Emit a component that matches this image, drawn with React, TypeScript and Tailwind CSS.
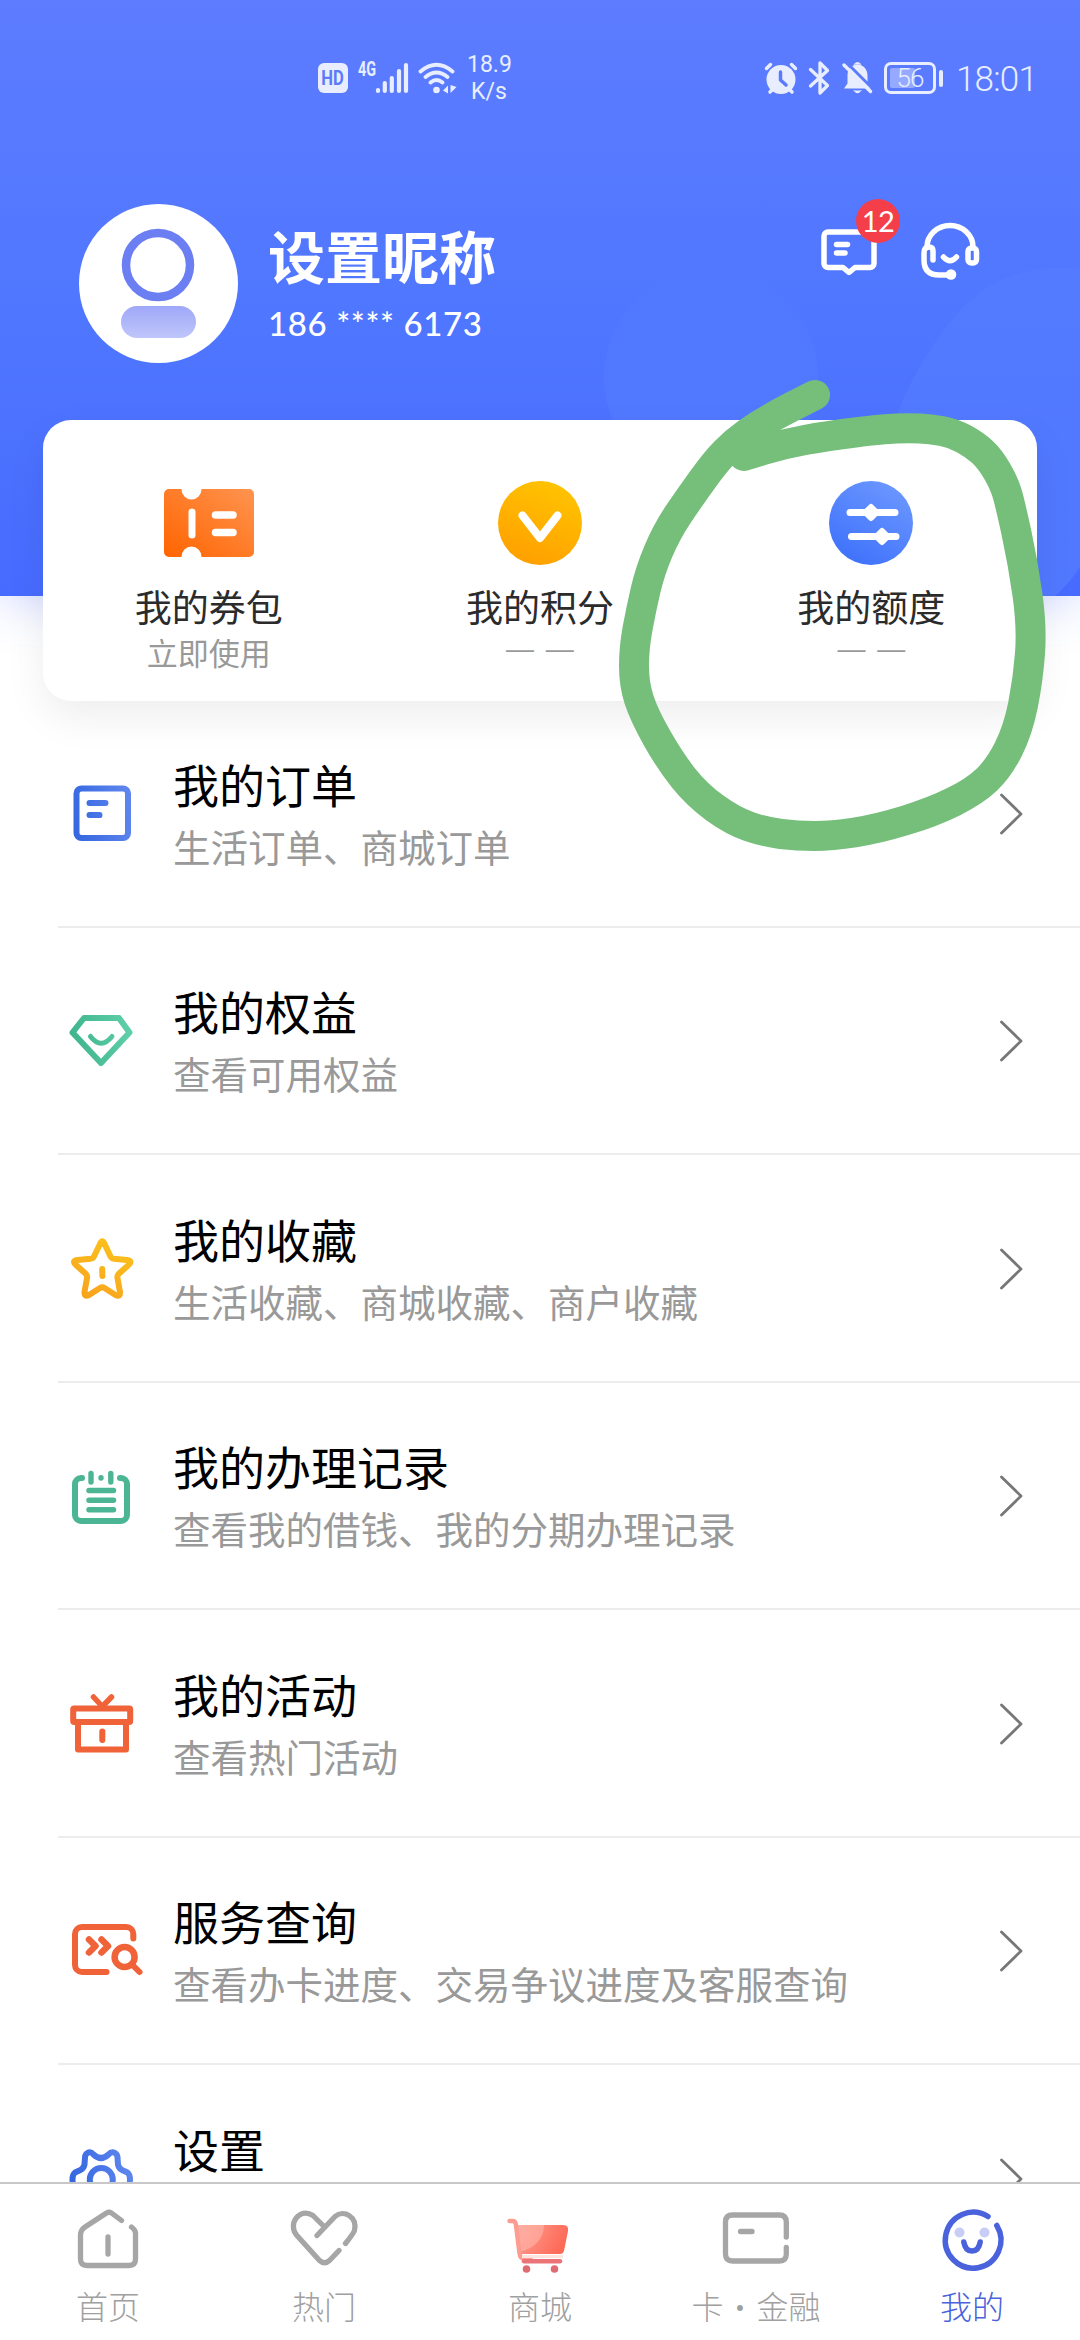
import type { ReactNode } from 'react';

const stroke = {
  fill: 'none',
  strokeLinecap: 'round' as const,
  strokeLinejoin: 'round' as const,
};

function Gradients() {
  return (
    <svg className="absolute" width="0" height="0" aria-hidden="true">
      <defs>
        <linearGradient id="blue" gradientUnits="userSpaceOnUse" x1="6" y1="40" x2="66" y2="28">
          <stop offset="0" stopColor="#3567e0" />
          <stop offset="1" stopColor="#5f86ee" />
        </linearGradient>
        <linearGradient id="green" gradientUnits="userSpaceOnUse" x1="6" y1="40" x2="66" y2="30">
          <stop offset="0" stopColor="#3fb48e" />
          <stop offset="1" stopColor="#5fcfa8" />
        </linearGradient>
        <linearGradient id="yellow" gradientUnits="userSpaceOnUse" x1="20" y1="66" x2="50" y2="6">
          <stop offset="0" stopColor="#f8a31c" />
          <stop offset="1" stopColor="#fbc21d" />
        </linearGradient>
        <linearGradient id="ticket" x1="0" y1="1" x2="1" y2="0">
          <stop offset="0" stopColor="#ff6400" />
          <stop offset="1" stopColor="#ff9450" />
        </linearGradient>
        <linearGradient id="points" x1="0.3" y1="1" x2="0.7" y2="0">
          <stop offset="0" stopColor="#ff9f00" />
          <stop offset="1" stopColor="#ffc400" />
        </linearGradient>
        <linearGradient id="quota" x1="0.2" y1="1" x2="0.8" y2="0">
          <stop offset="0" stopColor="#3d70fb" />
          <stop offset="1" stopColor="#6c98ff" />
        </linearGradient>
        <linearGradient id="cart" x1="0" y1="0" x2="1" y2="0.3">
          <stop offset="0" stopColor="#ffa396" />
          <stop offset="1" stopColor="#fd6a58" />
        </linearGradient>
        <linearGradient id="pill" x1="0" y1="0" x2="0" y2="1">
          <stop offset="0" stopColor="#9fa8f8" />
          <stop offset="1" stopColor="#bfc6fb" />
        </linearGradient>
        <linearGradient id="bubble" x1="0" y1="0" x2="0" y2="1">
          <stop offset="0" stopColor="#5b86ff" stopOpacity="0" />
          <stop offset="1" stopColor="#5b86ff" stopOpacity="0.45" />
        </linearGradient>
        <linearGradient id="leaf" x1="0" y1="0" x2="0" y2="1">
          <stop offset="0" stopColor="#5b86ff" stopOpacity="0.2" />
          <stop offset="1" stopColor="#5b86ff" stopOpacity="0.5" />
        </linearGradient>
      </defs>
    </svg>
  );
}

function StatusBar() {
  return (
    <div className="flex h-[106px] justify-between pt-[50px] pr-[47px] pl-[318px] text-[#e8eeff]">
      <div className="flex h-[56px] items-center">
        <div className="mr-[10px] flex h-[30px] w-[30px] items-center justify-center rounded-[6px] bg-[#e8eeff] font-['Roboto',sans-serif] text-[20px] leading-none font-bold text-[#5b7bfb]">
          <span className="inline-block scale-x-[0.83]">HD</span>
        </div>
        <span className="mr-[-1px] w-[18px] self-start pt-[8px] font-['Roboto',sans-serif] text-[20px] leading-[22px] font-bold">
          <span className="inline-block origin-left scale-x-[0.72]">4G</span>
        </span>
        <svg className="mr-[8px]" width="35" height="32" viewBox="0 0 35 32" stroke="currentColor" strokeWidth="4.2" {...stroke}>
          <path d="M3 29v-1M9.8 29v-8M16.8 29V16M24 29V9M31 29V3" />
        </svg>
        <svg className="mr-[9px]" width="40" height="32" viewBox="0 0 40 32" stroke="currentColor" strokeWidth="3.8" {...stroke}>
          <path d="M2.500 9.500Q18.500 -4 34.500 9.500M7.500 15Q18.500 6 29.500 15M12.500 20.500Q18.500 15.500 24.500 20.500" />
          <circle cx="18.500" cy="28" r="3.300" fill="currentColor" stroke="none" />
          <path d="M25 28.500l5-5v8zM32.500 23v8l6-6z" fill="currentColor" stroke="none" />
        </svg>
        <div className="w-[44px] text-center font-['Roboto',sans-serif] text-[23px] leading-[27px]">
          <div>18.9</div>
          <div>K/s</div>
        </div>
      </div>
      <div className="flex h-[56px] items-center">
        <svg className="mr-[10px]" width="34" height="34" viewBox="0 0 34 34" stroke="currentColor" {...stroke}>
          <circle cx="17" cy="18.500" r="14.500" fill="currentColor" stroke="none" />
          <path d="M2.500 7.500l4-4M31.500 7.500l-4-4M6 31l3-3M28 31l-3-3" strokeWidth="3.500" />
          <path d="M16.500 11v8l5.500 5" stroke="#5b7bfb" strokeWidth="3.500" />
        </svg>
        <svg className="mr-[11px]" width="23" height="36" viewBox="0 0 23 36" stroke="currentColor" strokeWidth="3.300" {...stroke}>
          <path d="M2.500 9.500L19.500 25.500L12 33V3L19.500 10.500L2.500 26" />
        </svg>
        <svg className="mr-[11px]" width="31" height="34" viewBox="0 0 31 34" {...stroke}>
          <path d="M15.500 3.500c6 0 10 5 10 11v8l3.500 5H2l3.500-5v-8c0-6 4-11 10-11z" fill="currentColor" />
          <path d="M12 3.500q3.500-4 7 0M12 29.500q3.500 5 7 0" fill="currentColor" stroke="currentColor" strokeWidth="1" />
          <path d="M3 0L31 28" stroke="#5b7bfb" strokeWidth="3" />
          <path d="M2 4L28.500 30.500" stroke="currentColor" strokeWidth="3.300" />
        </svg>
        <div className="relative flex h-[32px] w-[52px] items-center justify-center rounded-[7px] border-[3px] border-[#e8eeff]">
          <div className="absolute top-[3px] left-[3px] h-[20px] w-[25px] rounded-[2px] bg-[#94a9ff]" />
          <span className="relative font-['Roboto',sans-serif] text-[26px] leading-none font-light tracking-[-1px]">56</span>
        </div>
        <div className="mr-[13px] ml-[3px] h-[17px] w-[4px] rounded-[2px] bg-[#e8eeff]" />
        <span className="mt-[2px] w-[77px] font-['Roboto',sans-serif] text-[35px] leading-none font-light tracking-[-0.8px] whitespace-nowrap">18:01</span>
      </div>
    </div>
  );
}

function Profile() {
  return (
    <div className="flex items-start pt-[98px] pr-[98px] pl-[79px] text-white">
      <svg width="160" height="160" viewBox="0 0 160 160">
        <circle cx="79.500" cy="79.500" r="79.500" fill="#fff" />
        <circle cx="79" cy="61" r="32" fill="none" stroke="#6b7ef2" strokeWidth="8.500" />
        <rect x="42" y="102" width="75" height="32" rx="16" fill="url(#pill)" />
      </svg>
      <div className="mt-[16px] ml-[29px] flex-1">
        <h1 className="text-[57px] leading-[68px] font-bold">设置昵称</h1>
        <p className="mt-[15px] font-['Lato',sans-serif] text-[33px] leading-[40px] font-medium tracking-[0.6px]">186 **** 6173</p>
      </div>
      <div className="relative mt-[21px] mr-[40px]">
        <svg width="60" height="54" viewBox="0 0 60 54" stroke="#fff" strokeWidth="5.500" {...stroke}>
          <path d="M10 7H52a4 4 0 0 1 4 4V38.500a4 4 0 0 1-4 4H37l-6 5l-6-5H10a4 4 0 0 1-4-4V11a4 4 0 0 1 4-4z" />
          <path d="M18.500 19.500h11M18.500 28h8.500" />
        </svg>
        <span className="absolute top-[-26px] left-[38px] flex h-[44px] w-[44px] items-center justify-center rounded-full bg-[#f43f4a] pb-[2px] font-['Lato',sans-serif] text-[29px] leading-none tracking-[-0.5px]">
          12
        </span>
      </div>
      <svg className="mt-[16px]" width="64" height="64" viewBox="0 0 64 64" stroke="#fff" strokeWidth="5.500" {...stroke}>
        <path d="M9 27A23 21.500 0 0 1 55 27" />
        <path d="M15 40V31q0-4-4-4q-5 0-5 6v7q0 15 15 15h11" />
        <rect x="50" y="28" width="8.500" height="15" rx="3.500" />
        <path d="M25.500 37q6.500 7.500 13 0" />
        <circle cx="33" cy="54.500" r="5.300" fill="#fff" stroke="none" />
      </svg>
    </div>
  );
}

function Shortcut({ icon, label, hint }: { icon: ReactNode; label: string; hint?: string }) {
  return (
    <div className="flex flex-1 flex-col items-center pt-[57px]">
      <div className="flex h-[92px] items-center">{icon}</div>
      <div className="mt-[10px] text-[37px] leading-[54px] text-[#2b2b2b]">{label}</div>
      {hint ? (
        <div className="-mt-px text-[31px] leading-[40px] text-[#999]">{hint}</div>
      ) : (
        <div className="-mt-[2px] font-['Liberation_Sans',sans-serif] text-[28px] leading-[36px] text-[#999] [word-spacing:4px]">— —</div>
      )}
    </div>
  );
}

const shortcuts = [
  {
    label: '我的券包',
    hint: '立即使用',
    icon: (
      <svg width="90" height="68" viewBox="0 0 90 68">
        <path d="M5 0H17.500a10 10.500 0 0 0 20 0H85a5 5 0 0 1 5 5V63a5 5 0 0 1-5 5H37.500a10 10.500 0 0 0-20 0H5a5 5 0 0 1-5-5V5a5 5 0 0 1 5-5z" fill="url(#ticket)" />
        <path d="M28 23V46" stroke="#fff" strokeWidth="7" {...stroke} />
        <path d="M51.500 26H69M51.500 43.500H69" stroke="#fff" strokeWidth="7.500" {...stroke} />
      </svg>
    ),
  },
  {
    label: '我的积分',
    icon: (
      <svg width="84" height="84" viewBox="0 0 84 84">
        <circle cx="42" cy="42" r="42" fill="url(#points)" />
        <path d="M24.500 34.500L42 57L59.500 34.500" stroke="#fff" strokeWidth="8" {...stroke} />
      </svg>
    ),
  },
  {
    label: '我的额度',
    icon: (
      <svg width="84" height="84" viewBox="0 0 84 84">
        <circle cx="42" cy="42" r="42" fill="url(#quota)" />
        <path d="M21 31.500H66M22.500 55.500H67" stroke="#fff" strokeWidth="7" {...stroke} />
        <path d="M42 26l5.500 5.500L42 37l-5.500-5.500zM53 50l5.500 5.500L53 61l-5.500-5.500z" fill="#fff" stroke="#fff" strokeWidth="6" strokeLinejoin="round" />
      </svg>
    ),
  },
];

function ListIcon({ color, children }: { color: string; children: ReactNode }) {
  return (
    <svg className="ml-[66px] shrink-0 overflow-visible" width="72" height="72" viewBox="0 0 72 72" stroke={color} strokeWidth="6" {...stroke}>
      {children}
    </svg>
  );
}

const rows = [
  {
    title: '我的订单',
    desc: '生活订单、商城订单',
    icon: (
      <ListIcon color="url(#blue)">
        <rect x="10.500" y="10.500" width="51.500" height="49.500" rx="5" />
        <path d="M23.500 25L39.500 25.100M23.500 37L33.500 37.100" />
      </ListIcon>
    ),
  },
  {
    title: '我的权益',
    desc: '查看可用权益',
    icon: (
      <ListIcon color="url(#green)">
        <path d="M18 13H53L63.500 27.500L35 58L6.500 27.500z" />
        <path d="M24.500 31.500q10.500 13.500 21.500 0" strokeWidth="5" />
      </ListIcon>
    ),
  },
  {
    title: '我的收藏',
    desc: '生活收藏、商城收藏、商户收藏',
    icon: (
      <ListIcon color="url(#yellow)">
        <path d="M34 11Q36.300 5.500 38.600 11L44.500 23.500Q45.500 25.500 48 25.800L61 27Q67.500 28 62 32.500L52.500 41Q51 42.500 51.500 45L54 59Q54.500 64.500 49.500 62L38.500 55Q36.300 53.500 34 55L23 62Q18 64.500 18.500 59L21 45Q21.500 42.500 20 41L10.500 32.500Q5 28 11.500 27L24.500 25.800Q27 25.500 28 23.500z" />
        <path d="M36.200 36L36.400 43" />
      </ListIcon>
    ),
  },
  {
    title: '我的办理记录',
    desc: '查看我的借钱、我的分期办理记录',
    icon: (
      <ListIcon color="#4cb694">
        <path d="M16 18h-1a6 6 0 0 0-6 6v31a6 6 0 0 0 6 6h40a6 6 0 0 0 6-6V24a6 6 0 0 0-6-6h-1" />
        <path d="M25 13.500v8.500M44.800 13.500v8.500M35 17.800v.2" strokeWidth="5.400" />
        <path d="M23 30.500h24.500M23 40.300h24.500M23 49.800h24.500" strokeWidth="5.500" />
      </ListIcon>
    ),
  },
  {
    title: '我的活动',
    desc: '查看热门活动',
    icon: (
      <ListIcon color="#f06238">
        <rect x="7.200" y="20.500" width="57" height="13.500" rx="1" />
        <path d="M12 34V61.500H60V34" />
        <path d="M27.500 9L36.300 18.500L45.500 9" strokeWidth="5.500" />
        <path d="M36.300 43.500v8.500" />
      </ListIcon>
    ),
  },
  {
    title: '服务查询',
    desc: '查看办卡进度、交易争议进度及客服查询',
    icon: (
      <ListIcon color="#f06238">
        <path d="M67.300 23.500V19a7 7 0 0 0-7-7H16a7 7 0 0 0-7 7v31a7 7 0 0 0 7 7h24.500" />
        <path d="M23 24.500l6.500 6.500l-6.500 6.500M35.500 24.500l6.500 6.500l-6.500 6.500" strokeWidth="6.500" />
        <circle cx="58.600" cy="42" r="10" strokeWidth="6.500" />
        <path d="M66 49.500l7.500 7.500" />
      </ListIcon>
    ),
  },
  {
    title: '设置',
    desc: '',
    icon: (
      <ListIcon color="url(#blue)">
        <path d="M21.500 10Q24.500 8 27.500 11.500Q35 18.500 42.500 11.500Q45.500 8 49 10Q51.500 11.500 51.500 14.500L52 21.500Q52.500 25 56 27L61.500 29.500Q64 31.500 64 36.500Q64 41.500 61.500 43.500L56 46Q52.500 48 52 51.500L51.500 58.500Q51.500 61.500 49 63Q45.500 65 42.500 61.500Q35 54.500 27.500 61.500Q24.500 65 21.500 63Q19 61.500 19 58.500L18.500 51.500Q18 48 14.500 46L9 43.500Q6.500 41.500 6.500 36.500Q6.500 31.500 9 29.500L14.500 27Q18 25 18.500 21.500L19 14.500Q19 11.500 21.500 10z" />
        <circle cx="35.300" cy="36.500" r="11.500" />
      </ListIcon>
    ),
  },
];

const tabs = [
  {
    label: '首页',
    icon: (
      <svg width="72" height="72" viewBox="0 0 72 72" stroke="#a6a6a6" strokeWidth="5.300" {...stroke}>
        <path d="M49.500 17.500L39.500 10Q37 8.500 34.500 10L13 24Q8.500 27 8.500 32V56q0 6.500 6.500 6.500H57q6.500 0 6.500-6.500V30q0-3-4-6" />
        <path d="M36 34v17" />
      </svg>
    ),
  },
  {
    label: '热门',
    icon: (
      <svg width="72" height="72" viewBox="0 0 72 72" stroke="#a6a6a6" strokeWidth="5.300" {...stroke}>
        <path d="M29 32.500L47 13.500C56 6 69.500 14 66.500 27.500Q65.500 30.500 57.500 40.500M51 47.500L41.500 57.500Q36.500 62 31.500 57.500L8.500 32C-.5 21 11.500 4 25 12.500L36 23.500" />
      </svg>
    ),
  },
  {
    label: '商城',
    icon: (
      <svg className="-translate-y-[2px]" width="72" height="72" viewBox="0 0 72 72">
        <path d="M12 24H59q6 0 5 6L60 50q-1 3-4 3H16z" fill="url(#cart)" />
        <path d="M12 24h28q0 20-24 27z" fill="#ffb9ae" opacity="0.55" />
        <path d="M5.500 20h3q3 0 3.500 4l3.500 28q.5 6 6 6h5" stroke="#ff9c91" strokeWidth="4.500" {...stroke} />
        <path d="M20 60.200H56" stroke="#ec7478" strokeWidth="4.500" {...stroke} />
        <path d="M18 55.500H59" stroke="#ffe3df" strokeWidth="3" />
        <circle cx="22.500" cy="68" r="3.800" fill="#e06c73" />
        <circle cx="50.500" cy="68" r="3.800" fill="#e06c73" />
      </svg>
    ),
  },
  {
    label: '卡 • 金融',
    icon: (
      <svg width="72" height="72" viewBox="0 0 72 72" stroke="#a6a6a6" strokeWidth="5.300" {...stroke}>
        <path d="M66.300 34V19q0-7-7-7H12.500q-7 0-7 7V51q0 7 7 7H59.500q6.800 0 6.800-7V44.500" />
        <path d="M20.500 28.500h11.500" />
      </svg>
    ),
  },
  {
    label: '我的',
    active: true,
    icon: (
      <svg width="72" height="72" viewBox="0 0 72 72" stroke="#4a62dc" strokeWidth="5.500" {...stroke}>
        <path d="M52 13.500A27.800 28 0 1 0 60.800 22.500" />
        <circle cx="23.500" cy="29.500" r="5" fill="#c8cdf5" stroke="none" />
        <circle cx="48.500" cy="29.500" r="5" fill="#c8cdf5" stroke="none" />
        <path d="M27.800 39q1.500 9 8.200 9t8.200-9" />
      </svg>
    ),
  },
];

// freehand marker points, joined by curves through their midpoints
const markerPoints = [
  [815, 395], [787, 409], [760, 424], [735, 442], [716, 461], [690, 497], [667, 531], [650, 571], [641, 610], [634, 648],
  [634, 684], [644, 715], [670, 761], [697, 795], [733, 821], [765, 832], [797, 836], [832, 836], [877, 829], [933, 812],
  [975, 791], [999, 768], [1018, 730], [1028, 680], [1032, 627], [1023, 563], [1010, 503], [1004, 483], [990, 459], [975, 445],
  [953, 433], [930, 429], [910, 428], [883, 429], [827, 436], [783, 444], [744, 456],
];

function markerPath() {
  let d = `M${markerPoints[0].join(' ')}`;
  for (let i = 1; i < markerPoints.length - 1; i++) {
    const [x, y] = markerPoints[i];
    const [nx, ny] = markerPoints[i + 1];
    d += `Q${x} ${y} ${(x + nx) / 2} ${(y + ny) / 2}`;
  }
  return `${d}L${markerPoints[markerPoints.length - 1].join(' ')}`;
}

function Marker() {
  return (
    <svg className="pointer-events-none absolute top-0 left-0" width="1080" height="900" viewBox="0 0 1080 900">
      <path d={markerPath()} stroke="#75bf7b" strokeWidth="30" {...stroke} />
    </svg>
  );
}

export default function App() {
  return (
    <div className="relative flex h-[2340px] w-[1080px] flex-col overflow-hidden bg-white font-['Noto_Sans_CJK_SC',sans-serif]">
      <Gradients />
      <header className="relative h-[596px] shrink-0 bg-gradient-to-b from-[#5d7cff] via-[#5077ff] to-[#476bff] shadow-[0_0_50px_rgba(80,110,255,0.35)]">
        <svg className="absolute top-0 left-0" width="1080" height="596" viewBox="0 0 1080 596">
          <circle cx="711" cy="377" r="107" fill="url(#bubble)" />
          <path d="M860 596Q870 470 895 420Q915 365 952 320Q1000 260 1080 269V567Q1068 585 1055 596z" fill="url(#leaf)" />
        </svg>
        <div className="relative">
          <StatusBar />
          <Profile />
        </div>
      </header>

      <section className="relative mx-[43px] -mt-[176px] flex h-[281px] shrink-0 rounded-[28px] bg-white shadow-[0_16px_40px_rgba(0,0,0,0.07)]">
        {shortcuts.map((item) => (
          <Shortcut key={item.label} {...item} />
        ))}
      </section>

      <main className="relative -mt-px min-h-0 flex-1 overflow-hidden">
        {rows.map((row) => (
          <div key={row.title} className="flex h-[227.5px] flex-col">
            <div className="flex min-h-0 flex-1 items-center pt-[2px]">
              {row.icon}
              <div className="ml-[35px] flex-1">
                <div className="-mt-[4px] text-[46px] leading-[60px] text-black">{row.title}</div>
                <div className="mt-[8px] h-[50px] text-[37.5px] leading-[50px] text-[#999]">{row.desc}</div>
              </div>
              <svg className="mr-[55px]" width="26" height="44" viewBox="0 0 26 44" stroke="#777" strokeWidth="2.800" {...stroke}>
                <path d="M2.500 3L22 22L2.500 41" />
              </svg>
            </div>
            <div className="ml-[58px] h-[2px] shrink-0 bg-[#ececec]" />
          </div>
        ))}
      </main>

      <nav className="relative flex h-[158px] shrink-0 border-t-2 border-[#c8c8c8] bg-white">
        {tabs.map((tab) => (
          <div key={tab.label} className="flex flex-1 flex-col items-center pt-[19px]">
            {tab.icon}
            <span className={`mt-[11px] font-['Roboto','Noto_Sans_CJK_SC',sans-serif] text-[32px] leading-[44px] font-light [word-spacing:3.5px] ${tab.active ? 'text-[#4a62dc]' : 'text-[#a0a0a0]'}`}>
              {tab.label}
            </span>
          </div>
        ))}
      </nav>

      <Marker />
    </div>
  );
}
